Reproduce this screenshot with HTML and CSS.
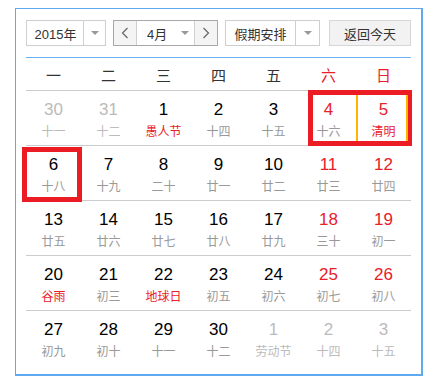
FILE: index.html
```html
<!DOCTYPE html>
<html lang="zh-CN">
<head>
  <meta charset="UTF-8">
  <title>万年历</title>
  <link rel="stylesheet" href="styles.css">
</head>
<body>
  <div class="cal">
    <!-- 顶部控制栏 -->
    <div class="toolbar">
      <div class="select year">
        <span class="select-text">2015年</span>
        <span class="select-arrow"><i class="tri"></i></span>
      </div>
      <div class="select month">
        <span class="nav-btn">
          <svg width="8" height="12" viewBox="0 0 8 12"><path d="M6.5 1 L1.5 6 L6.5 11" fill="none" stroke="#666" stroke-width="1.2"/></svg>
        </span>
        <span class="select-text">4月</span>
        <span class="month-arrow"><i class="tri"></i></span>
        <span class="nav-btn">
          <svg width="8" height="12" viewBox="0 0 8 12"><path d="M1.5 1 L6.5 6 L1.5 11" fill="none" stroke="#666" stroke-width="1.2"/></svg>
        </span>
      </div>
      <div class="select holiday">
        <span class="select-text">假期安排</span>
        <span class="select-arrow"><i class="tri"></i></span>
      </div>
      <button class="today-btn" type="button">返回今天</button>
    </div>

    <!-- 星期 -->
    <div class="week">
      <span>一</span><span>二</span><span>三</span><span>四</span><span>五</span>
      <span class="red">六</span><span class="red">日</span>
    </div>

    <!-- 日期 -->
    <div class="days">
      <div class="row">
        <div class="day other"><b>30</b><em>十一</em></div>
        <div class="day other"><b>31</b><em>十二</em></div>
        <div class="day"><b>1</b><em class="fest">愚人节</em></div>
        <div class="day"><b>2</b><em>十四</em></div>
        <div class="day"><b>3</b><em>十五</em></div>
        <div class="day weekend"><b>4</b><em>十六</em></div>
        <div class="day weekend"><b>5</b><em class="fest">清明</em></div>
      </div>
      <div class="row">
        <div class="day"><b>6</b><em>十八</em></div>
        <div class="day"><b>7</b><em>十九</em></div>
        <div class="day"><b>8</b><em>二十</em></div>
        <div class="day"><b>9</b><em>廿一</em></div>
        <div class="day"><b>10</b><em>廿二</em></div>
        <div class="day weekend"><b>11</b><em>廿三</em></div>
        <div class="day weekend"><b>12</b><em>廿四</em></div>
      </div>
      <div class="row">
        <div class="day"><b>13</b><em>廿五</em></div>
        <div class="day"><b>14</b><em>廿六</em></div>
        <div class="day"><b>15</b><em>廿七</em></div>
        <div class="day"><b>16</b><em>廿八</em></div>
        <div class="day"><b>17</b><em>廿九</em></div>
        <div class="day weekend"><b>18</b><em>三十</em></div>
        <div class="day weekend"><b>19</b><em>初一</em></div>
      </div>
      <div class="row">
        <div class="day"><b>20</b><em class="fest">谷雨</em></div>
        <div class="day"><b>21</b><em>初三</em></div>
        <div class="day"><b>22</b><em class="fest">地球日</em></div>
        <div class="day"><b>23</b><em>初五</em></div>
        <div class="day"><b>24</b><em>初六</em></div>
        <div class="day weekend"><b>25</b><em>初七</em></div>
        <div class="day weekend"><b>26</b><em>初八</em></div>
      </div>
      <div class="row">
        <div class="day"><b>27</b><em>初九</em></div>
        <div class="day"><b>28</b><em>初十</em></div>
        <div class="day"><b>29</b><em>十一</em></div>
        <div class="day"><b>30</b><em>十二</em></div>
        <div class="day other"><b>1</b><em>劳动节</em></div>
        <div class="day other"><b>2</b><em>十四</em></div>
        <div class="day other"><b>3</b><em>十五</em></div>
      </div>
    </div>

    <!-- 标注框 -->
    <div class="mark mark-weekend"></div>
    <div class="hover-line line-a"></div>
    <div class="hover-line line-b"></div>
    <div class="mark mark-today"></div>
  </div>
</body>
</html>
```

FILE: styles.css
```css
/* 全局 */
body {
  margin: 0;
  background: #fff;
  font-family: "Liberation Sans", "Noto Sans CJK SC", sans-serif;
  color: #333;
}
.cal {
  position: relative;
  margin: 8px 0 0 15px;
  width: 385px;
  padding: 11px 10px 9px;
  border: 1px solid #5fa9f0;
  border-right-width: 2px;
  border-bottom-width: 2px;
}
/* 控制栏 */
.toolbar {
  display: flex;
  height: 26px;
}
.select {
  display: flex;
  height: 26px;
  box-sizing: border-box;
  border: 1px solid #cfcfcf;
  font-size: 13px;
  color: #333;
  font-family: "Noto Sans CJK SC", sans-serif;
}
.select-text {
  display: flex;
  align-items: center;
}
.year {
  width: 80px;
}
.year .select-text {
  width: 55px;
  padding-left: 1px;
  justify-content: center;
  font-family: "Liberation Sans", "Noto Sans CJK SC", sans-serif;
}
.select-arrow {
  flex: 1;
  display: flex;
  align-items: center;
  justify-content: center;
  border-left: 1px solid #cfcfcf;
}
.tri {
  display: block;
  width: 0;
  height: 0;
  border-left: 4px solid transparent;
  border-right: 4px solid transparent;
  border-top: 4px solid #999;
}
.month {
  margin-left: 7px;
  width: 105px;
  border-color: #a8a8a8;
}
.nav-btn {
  width: 22px;
  display: flex;
  align-items: center;
  justify-content: center;
  background: #f4f4f4;
}
.nav-btn:first-child {
  border-right: 1px solid #cfcfcf;
}
.nav-btn:last-child {
  border-left: 1px solid #cfcfcf;
}
.month .select-text {
  padding-left: 10px;
  width: 28px;
  font-family: "Liberation Sans", "Noto Sans CJK SC", sans-serif;
}
.month-arrow {
  flex: 1;
  display: flex;
  align-items: center;
  justify-content: center;
}
.holiday {
  margin-left: 7px;
  width: 95px;
}
.holiday .select-text {
  width: 69px;
  justify-content: center;
}
.today-btn {
  margin-left: 9px;
  width: 82px;
  height: 26px;
  padding: 0;
  border: 1px solid #d6d6d6;
  background: #f2f2f2;
  font-family: "Noto Sans CJK SC", sans-serif;
  font-size: 13px;
  color: #333;
}
/* 星期 */
.week {
  display: grid;
  grid-template-columns: repeat(7, 55px);
  margin-top: 11px;
  border-top: 1px solid #6ab2f2;
  height: 32px;
  align-items: center;
  text-align: center;
  font-family: "Noto Sans CJK SC", sans-serif;
  font-size: 15px;
  color: #333;
}
.week .red {
  color: #e8202a;
}
/* 日期格子 */
.row {
  display: grid;
  grid-template-columns: repeat(7, 55px);
  border-top: 1px solid #cccccc;
  height: 54px;
}
.day {
  text-align: center;
  padding-top: 8px;
}
.day b {
  display: block;
  font-weight: normal;
  font-size: 17px;
  line-height: 22px;
  color: #000;
}
.day em {
  display: block;
  font-style: normal;
  font-family: "Noto Sans CJK SC", sans-serif;
  font-size: 12px;
  line-height: 20px;
  color: #999;
}
.day.weekend b {
  color: #e8202a;
}
.day em.fest {
  color: #e8202a;
}
.day.other b,
.day.other em {
  color: #bbb;
}
/* 标注 */
.mark {
  position: absolute;
  box-sizing: border-box;
  border: 5px solid #ec1c24;
}
.mark-weekend {
  left: 292px;
  top: 81px;
  width: 104px;
  height: 56px;
}
.mark-today {
  left: 6px;
  top: 138px;
  width: 60px;
  height: 55px;
}
.hover-line {
  position: absolute;
  top: 86px;
  height: 46px;
  width: 2px;
  background: #ffb400;
}
.line-a {
  left: 340px;
}
.line-b {
  left: 390px;
}
```
